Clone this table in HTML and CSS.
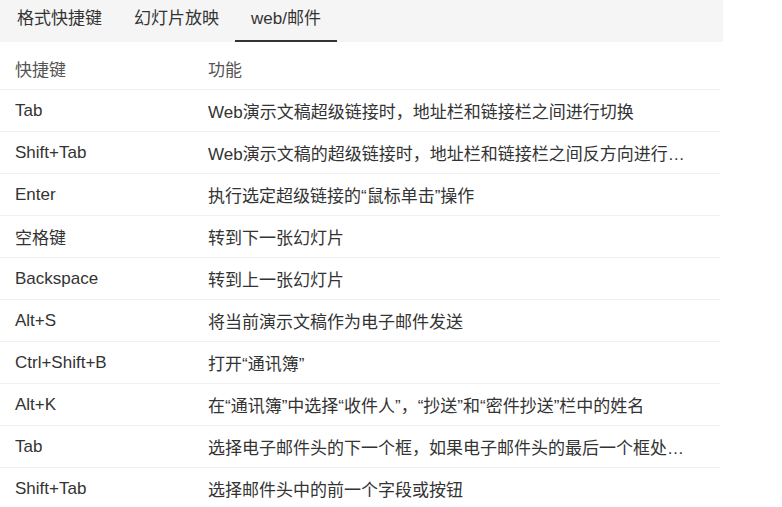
FILE: index.html
```html
<!DOCTYPE html>
<html lang="zh-CN">
<head>
<meta charset="utf-8">
<title>快捷键</title>
<link rel="stylesheet" href="styles.css">
</head>
<body>
<div class="panel">
  <div class="tabs">
    <div class="tab">格式快捷键</div>
    <div class="tab">幻灯片放映</div>
    <div class="tab active">web/邮件</div>
  </div>
  <div class="table">
    <div class="row head"><div class="key">快捷键</div><div class="desc">功能</div></div>
    <div class="row"><div class="key">Tab</div><div class="desc">Web演示文稿超级链接时，地址栏和链接栏之间进行切换</div></div>
    <div class="row"><div class="key">Shift+Tab</div><div class="desc">Web演示文稿的超级链接时，地址栏和链接栏之间反方向进行…</div></div>
    <div class="row"><div class="key">Enter</div><div class="desc">执行选定超级链接的“鼠标单击”操作</div></div>
    <div class="row"><div class="key">空格键</div><div class="desc">转到下一张幻灯片</div></div>
    <div class="row"><div class="key">Backspace</div><div class="desc">转到上一张幻灯片</div></div>
    <div class="row"><div class="key">Alt+S</div><div class="desc">将当前演示文稿作为电子邮件发送</div></div>
    <div class="row"><div class="key">Ctrl+Shift+B</div><div class="desc">打开“通讯簿”</div></div>
    <div class="row"><div class="key">Alt+K</div><div class="desc">在“通讯簿”中选择“收件人”，“抄送”和“密件抄送”栏中的姓名</div></div>
    <div class="row"><div class="key">Tab</div><div class="desc">选择电子邮件头的下一个框，如果电子邮件头的最后一个框处…</div></div>
    <div class="row"><div class="key">Shift+Tab</div><div class="desc">选择邮件头中的前一个字段或按钮</div></div>
  </div>
</div>
</body>
</html>
```
FILE: styles.css
```css
html, body {
  margin: 0;
  padding: 0;
  background: #fff;
}
body {
  font-family: "Liberation Sans", "Noto Sans CJK SC", sans-serif;
  color: #333;
  font-size: 17px;
  overflow: hidden;
}
.panel {
  width: 723px;
}
.tabs {
  display: flex;
  height: 42px;
  background: #f5f5f5;
  padding-left: 1px;
}
.tab {
  padding: 0 16px;
  height: 42px;
  line-height: 38px;
  box-sizing: border-box;
  color: #333;
  white-space: nowrap;
}
.tab.active {
  border-bottom: 2px solid #333;
}
.table {
  width: 720px;
  margin-top: 6px;
}
.row {
  display: flex;
  height: 41px;
  align-items: center;
  border-bottom: 1px solid #f0f0f0;
}
.row.head {
  color: #555;
}
.key {
  width: 193px;
  padding-left: 15px;
  flex: none;
  white-space: nowrap;
}
.desc {
  flex: 1;
  white-space: nowrap;
}
```
